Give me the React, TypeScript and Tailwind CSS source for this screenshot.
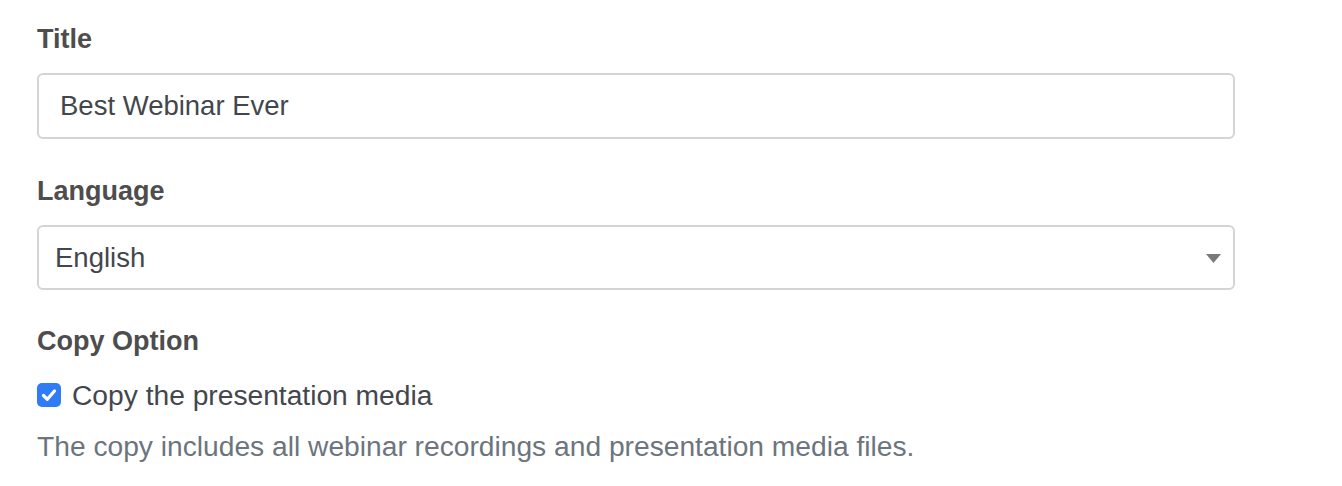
import React, { useState } from 'react';

export default function App() {
  const [title, setTitle] = useState('Best Webinar Ever');
  const [copyMedia, setCopyMedia] = useState(true);

  return (
    <div className="min-h-[486px] bg-white pl-[37px] pt-[19px] font-['Liberation_Sans',Arial,sans-serif]">
      <div className="w-[1198px]">
        {/* Title */}
        <label className="block text-[27px] font-bold leading-[40px] text-[#4d4d4d]">Title</label>
        <input
          value={title}
          onChange={(e) => setTitle(e.target.value)}
          className="mt-[14px] block h-[66px] w-full rounded-[6px] border-2 border-[#d4d4d4] px-[21px] text-[27.5px] text-[#43474c] outline-none"
        />

        {/* Language */}
        <label className="mt-[32px] block text-[27px] font-bold leading-[40px] text-[#4d4d4d]">Language</label>
        <div className="relative mt-[14px]">
          <select className="block h-[65px] w-full appearance-none rounded-[6px] border-2 border-[#d4d4d4] bg-white px-[16px] text-[27.5px] text-[#43474c] outline-none">
            <option>English</option>
          </select>
          <svg className="pointer-events-none absolute right-[14px] top-[29px]" width="15" height="10" viewBox="0 0 15 10">
            <path d="M0 0h15L7.5 9z" fill="#7a7a7a" />
          </svg>
        </div>

        {/* Copy Option */}
        <label className="mt-[31px] block text-[27px] font-bold leading-[40px] text-[#4d4d4d]">Copy Option</label>
        <label className="mt-[14px] flex cursor-pointer items-center gap-[11px] leading-[40px]">
          <span
            onClick={() => setCopyMedia(!copyMedia)}
            className={`flex h-[24px] w-[24px] items-center justify-center rounded-[5px] ${copyMedia ? 'bg-[#2f7cf6]' : 'border-2 border-[#999] bg-white'}`}
          >
            {copyMedia && (
              <svg width="20" height="20" viewBox="0 0 20 20">
                <path d="M4.5 10.5l3.8 3.8L15.5 6" fill="none" stroke="white" strokeWidth="3.2" strokeLinecap="round" strokeLinejoin="round" />
              </svg>
            )}
          </span>
          <span className="text-[28.2px] text-[#43474c]">Copy the presentation media</span>
        </label>
        <p className="mt-[11px] text-[28.2px] leading-[40px] text-[#6c757d]">
          The copy includes all webinar recordings and presentation media files.
        </p>
      </div>
    </div>
  );
}
